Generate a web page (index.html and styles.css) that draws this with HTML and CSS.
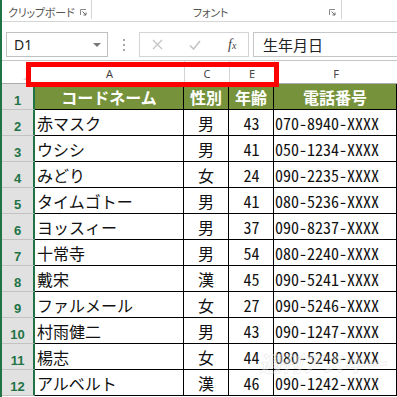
FILE: index.html
```html
<!DOCTYPE html>
<html lang="ja">
<head>
    <meta charset="UTF-8" />
    <meta name="viewport" content="width=device-width, initial-scale=1.0" />
    <title>名簿 - Excel</title>
    <link rel="stylesheet" href="styles.css">
</head>
<body>
    <div class="window">
        <!-- リボン（下端のみ） -->
        <div class="ribbon">
            <div class="group group-clip">
                <span class="group-label">クリップボード</span>
                <svg class="launcher" width="7" height="7" viewBox="0 0 7 7">
                    <path d="M0.5 6V0.5H6" fill="none" stroke="#8a8a8a" />
                    <path d="M2.5 2.5L6 6M6 3.5V6H3.5" fill="none" stroke="#6a6a6a" />
                </svg>
            </div>
            <div class="group group-font">
                <span class="group-label">フォント</span>
                <svg class="launcher" width="7" height="7" viewBox="0 0 7 7">
                    <path d="M0.5 6V0.5H6" fill="none" stroke="#8a8a8a" />
                    <path d="M2.5 2.5L6 6M6 3.5V6H3.5" fill="none" stroke="#6a6a6a" />
                </svg>
            </div>
        </div>

        <!-- 数式バー -->
        <div class="formula-bar">
            <div class="name-box">
                <span>D1</span>
                <span class="caret"></span>
            </div>
            <div class="grip"><i></i><i></i><i></i></div>
            <div class="fx-buttons">
                <svg width="11" height="11" viewBox="0 0 11 11">
                    <path d="M1 1L10 10M10 1L1 10" stroke="#c4c4c4" stroke-width="1.3" />
                </svg>
                <svg width="12" height="10" viewBox="0 0 12 10">
                    <path d="M1 5.5L4.5 9L11 1" fill="none" stroke="#c4c4c4" stroke-width="1.6" />
                </svg>
                <span class="fx">f<small>x</small></span>
            </div>
            <div class="formula-input">生年月日</div>
        </div>

        <!-- シート -->
        <div class="sheet">
            <div class="grid">
                <div class="corner"></div>
                <div class="col-head">A</div>
                <div class="col-head hidden-left">C</div>
                <div class="col-head hidden-left">E</div>
                <div class="col-head">F</div>

                <div class="row-head">1</div>
                <div class="cell title">コードネーム</div>
                <div class="cell title">性別</div>
                <div class="cell title">年齢</div>
                <div class="cell title">電話番号</div>

                <div class="row-head">2</div>
                <div class="cell">赤マスク</div>
                <div class="cell center">男</div>
                <div class="cell center num">43</div>
                <div class="cell num">070-8940-XXXX</div>

                <div class="row-head">3</div>
                <div class="cell">ウシシ</div>
                <div class="cell center">男</div>
                <div class="cell center num">41</div>
                <div class="cell num">050-1234-XXXX</div>

                <div class="row-head">4</div>
                <div class="cell">みどり</div>
                <div class="cell center">女</div>
                <div class="cell center num">24</div>
                <div class="cell num">090-2235-XXXX</div>

                <div class="row-head">5</div>
                <div class="cell">タイムゴトー</div>
                <div class="cell center">男</div>
                <div class="cell center num">41</div>
                <div class="cell num">080-5236-XXXX</div>

                <div class="row-head">6</div>
                <div class="cell">ヨッスィー</div>
                <div class="cell center">男</div>
                <div class="cell center num">37</div>
                <div class="cell num">090-8237-XXXX</div>

                <div class="row-head">7</div>
                <div class="cell">十常寺</div>
                <div class="cell center">男</div>
                <div class="cell center num">54</div>
                <div class="cell num">080-2240-XXXX</div>

                <div class="row-head">8</div>
                <div class="cell">戴宋</div>
                <div class="cell center">漢</div>
                <div class="cell center num">45</div>
                <div class="cell num">090-5241-XXXX</div>

                <div class="row-head">9</div>
                <div class="cell">ファルメール</div>
                <div class="cell center">女</div>
                <div class="cell center num">27</div>
                <div class="cell num">090-5246-XXXX</div>

                <div class="row-head">10</div>
                <div class="cell">村雨健二</div>
                <div class="cell center">男</div>
                <div class="cell center num">43</div>
                <div class="cell num">090-1247-XXXX</div>

                <div class="row-head">11</div>
                <div class="cell">楊志</div>
                <div class="cell center">女</div>
                <div class="cell center num">44</div>
                <div class="cell num">080-5248-XXXX</div>

                <div class="row-head">12</div>
                <div class="cell">アルベルト</div>
                <div class="cell center">漢</div>
                <div class="cell center num">46</div>
                <div class="cell num">090-1242-XXXX</div>
            </div>

            <!-- 注目枠とウォーターマーク -->
            <div class="highlight"></div>
            <div class="watermark">週刊アスキー</div>
        </div>
    </div>
</body>
</html>
```

FILE: styles.css
```css
:root {
    --excel-green: #217346;
    --title-green: #76933c;
    --ui-gray: #c6c6c6;
    --text-color: #222;
    --jp-font: "Noto Sans CJK JP", sans-serif;
    --ui-font: "Noto Sans", "Liberation Sans", sans-serif;
}

* {
    margin: 0;
    padding: 0;
    box-sizing: border-box;
}

html, body {
    width: 397px;
    height: 397px;
    overflow: hidden;
    background: #fff;
}

.window {
    height: 397px;
    border-left: 2px solid var(--excel-green);
    font-family: var(--jp-font);
    color: var(--text-color);
}

/* Ribbon */
.ribbon {
    display: flex;
    height: 22px;
    border-bottom: 1px solid #d5d5d5;
}

.group {
    display: flex;
    align-items: center;
    height: 19px;
    padding-top: 5px;
    border-right: 1px solid #d5d5d5;
}

.group-clip {
    width: 90px;
    padding-left: 6px;
    padding-right: 4px;
}

.group-font {
    width: 250px;
    padding-right: 5px;
}

.group-label {
    font-size: 11px;
    color: #555;
    font-feature-settings: "palt";
    letter-spacing: -0.2px;
}

.group-clip .launcher {
    margin-left: auto;
}

.group-font .group-label {
    margin-left: auto;
    margin-right: auto;
}

/* Formula bar */
.formula-bar {
    display: flex;
    height: 38px;
    padding: 10px 0 3px 4px;
}

.name-box {
    display: flex;
    align-items: center;
    width: 102px;
    border: 1px solid #c0c0c0;
    padding-left: 7px;
    font-family: var(--ui-font);
    font-size: 14px;
    color: #222;
}

.caret {
    margin-left: auto;
    margin-right: 6px;
    border-left: 4px solid transparent;
    border-right: 4px solid transparent;
    border-top: 4px solid #777;
}

.grip {
    width: 31px;
    display: flex;
    flex-direction: column;
    align-items: center;
    justify-content: center;
    gap: 3px;
}

.grip i {
    width: 2px;
    height: 2px;
    background: #a8a8a8;
}

.fx-buttons {
    display: flex;
    align-items: center;
    width: 110px;
    border: 1px solid #d4d4d4;
    padding-left: 12px;
    gap: 26px;
}

.fx {
    font-family: "Liberation Serif", serif;
    font-style: italic;
    font-size: 14px;
    color: #444;
    margin-left: 1px;
}

.fx small {
    font-size: 10px;
}

.formula-input {
    flex: 1;
    margin-left: 4px;
    border: 1px solid #c6c6c6;
    border-right: none;
    padding-left: 9px;
    font-size: 15px;
    line-height: 23px;
    color: #222;
}

/* Sheet */
.sheet {
    position: relative;
}

.grid {
    display: grid;
    grid-template-columns: 33px 149px 45px 45px 1fr;
    grid-template-rows: 24px repeat(12, 26px);
}

.corner,
.col-head {
    border-top: 1px solid #c6c6c6;
    border-bottom: 1px solid #ababab;
    background: #fff;
}

.corner {
    position: relative;
}

.corner::after {
    content: '';
    position: absolute;
    right: 5px;
    bottom: 3px;
    border-left: 7px solid transparent;
    border-bottom: 7px solid #dadada;
}

.col-head {
    display: flex;
    align-items: center;
    justify-content: center;
    padding-top: 3px;
    border-left: 1px solid #d4d4d4;
    font-family: var(--ui-font);
    font-size: 11px;
    color: #444;
    position: relative;
}

.col-head:nth-child(2) {
    border-left: none;
}

.hidden-left::before {
    content: '';
    position: absolute;
    left: -1px;
    bottom: -1px;
    width: 2px;
    height: 2px;
    background: var(--excel-green);
}

.row-head {
    display: flex;
    align-items: flex-end;
    justify-content: center;
    padding-bottom: 1px;
    background: #e1e1e1;
    border-right: 2px solid var(--excel-green);
    border-bottom: 1px solid #c2c2c2;
    font-family: "Liberation Sans", sans-serif;
    font-weight: bold;
    font-size: 13px;
    color: var(--excel-green);
}

.cell {
    display: flex;
    align-items: center;
    padding-left: 2px;
    border-right: 1px solid #000;
    border-bottom: 1px solid #000;
    font-size: 16px;
    white-space: nowrap;
    overflow: hidden;
    color: #111;
}

.cell.center {
    justify-content: center;
    padding-left: 0;
}

.cell.num {
    font-feature-settings: "hwid";
    padding-left: 1px;
}

.cell.title {
    justify-content: center;
    padding-left: 0;
    background: var(--title-green);
    color: #fff;
    font-weight: bold;
}

.highlight {
    position: absolute;
    left: 24px;
    top: 2px;
    width: 253px;
    height: 25px;
    border: 5px solid #ff0000;
}

.watermark {
    position: absolute;
    left: 257px;
    top: 286px;
    font-size: 22px;
    font-weight: bold;
    font-style: italic;
    letter-spacing: -1px;
    color: rgba(255, 255, 255, 0.35);
    -webkit-text-stroke: 1px rgba(150, 150, 150, 0.16);
}
```
